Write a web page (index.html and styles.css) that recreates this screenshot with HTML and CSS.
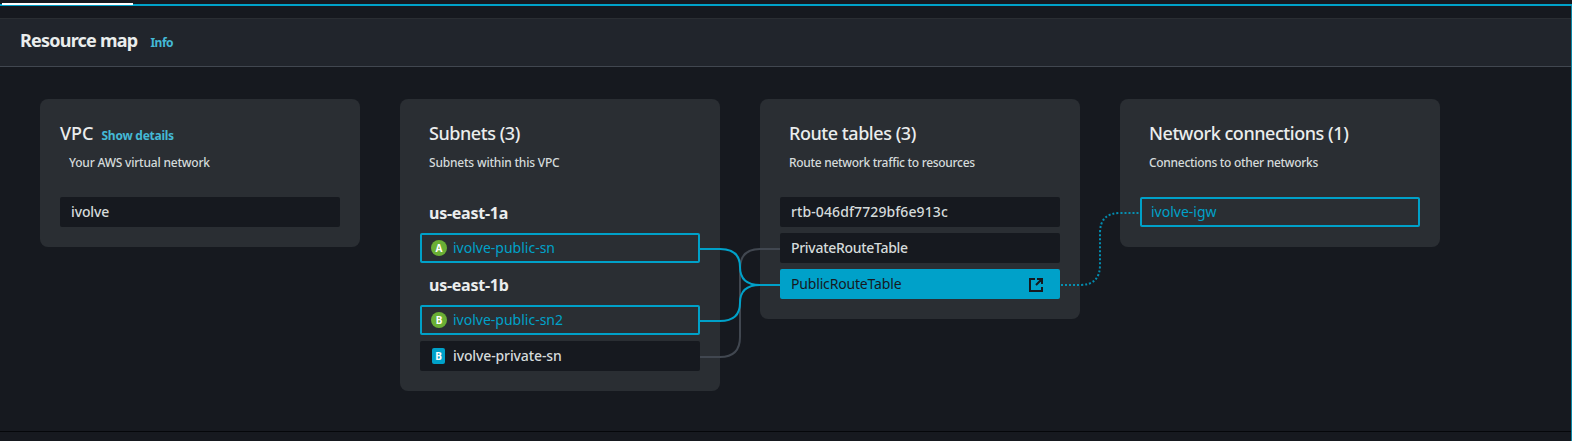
FILE: index.html
```html
<!DOCTYPE html>
<html lang="en">
<head>
<meta charset="utf-8">
<title>Resource map</title>
<link rel="stylesheet" href="styles.css">
</head>
<body>
<div class="tabs"><span class="tab-active"></span></div>
<section class="panel">
  <header class="panel-header">
    <h2 class="panel-title">Resource map</h2>
    <a class="link info">Info</a>
  </header>
  <div class="map">
    <article class="card">
      <div class="card-head card-head-vpc">
        <div class="title-row"><h3 class="card-title title-vpc">VPC</h3><a class="link details">Show details</a></div>
        <p class="card-desc desc-vpc">Your AWS virtual network</p>
      </div>
      <div class="item"><span class="name">ivolve</span></div>
    </article>
    <article class="card">
      <div class="card-head">
        <div class="title-row"><h3 class="card-title">Subnets (3)</h3></div>
        <p class="card-desc">Subnets within this VPC</p>
      </div>
      <h4 class="zone">us-east-1a</h4>
      <div class="item outlined"><span class="badge public">A</span><span class="name">ivolve-public-sn</span></div>
      <h4 class="zone">us-east-1b</h4>
      <div class="item outlined"><span class="badge public">B</span><span class="name">ivolve-public-sn2</span></div>
      <div class="item"><span class="badge private">B</span><span class="name">ivolve-private-sn</span></div>
    </article>
    <article class="card">
      <div class="card-head">
        <div class="title-row"><h3 class="card-title">Route tables (3)</h3></div>
        <p class="card-desc desc-tight">Route network traffic to resources</p>
      </div>
      <div class="item"><span class="name name-id">rtb-046df7729bf6e913c</span></div>
      <div class="item"><span class="name name-table">PrivateRouteTable</span></div>
      <div class="item selected"><span class="name name-table">PublicRouteTable</span>
        <svg class="external" viewBox="0 0 16 16" width="16" height="16"><path d="M7 2H2v12h12v-4M9 2h5v5M14 2 8 8"/></svg>
      </div>
    </article>
    <article class="card">
      <div class="card-head">
        <div class="title-row"><h3 class="card-title">Network connections (1)</h3></div>
        <p class="card-desc desc-tight">Connections to other networks</p>
      </div>
      <div class="item outlined"><span class="name">ivolve-igw</span></div>
    </article>
    <svg class="connections" viewBox="0 0 1400 292" width="1400" height="292">
      <path class="wire" d="M660 258H680Q700 258 700 238V170Q700 150 720 150H740"/>
      <path class="wire active" d="M660 150H680Q700 150 700 168Q700 186 720 186H740"/>
      <path class="wire active" d="M660 222H680Q700 222 700 204Q700 186 720 186H740"/>
      <path class="wire active dotted" d="M1021 186H1040Q1060 186 1060 166V134Q1060 114 1080 114H1100"/>
    </svg>
  </div>
</section>
</body>
</html>
```
FILE: styles.css
```css
* { box-sizing: border-box; margin: 0; padding: 0; }
body {
  height: 441px;
  overflow: hidden;
  background: #16191f;
  color: #eaeded;
  font-family: "Noto Sans", "Open Sans", sans-serif;
  display: flex;
  flex-direction: column;
}
.tabs { height: 6px; flex: none; border-bottom: 2px solid #00a1c9; }
.tab-active {
  position: absolute; left: 2px; top: 3px;
  width: 131px; height: 2px; background: #fff;
}
.panel {
  height: 426px;
  flex: none;
  padding-top: 12px;
  border-bottom: 1px solid #05070a;
}
body::after {
  content: "";
  position: absolute; right: 0; top: 6px;
  width: 1px; height: 435px; background: #0b86a5;
}
.panel-header {
  height: 49px;
  display: flex;
  align-items: baseline;
  gap: 13px;
  padding: 8px 20px 0;
  background: #21252c;
  border-top: 1px solid #2a2e33;
  border-bottom: 1px solid #414750;
}
.panel-title { font-size: 18px; line-height: 26px; font-weight: 700; letter-spacing: -0.77px; }
.link { color: #44b9d6; font-size: 12px; font-weight: 700; }
.info { letter-spacing: -0.5px; }
.details { letter-spacing: -0.25px; }
.map {
  position: relative;
  display: flex;
  align-items: flex-start;
  gap: 40px;
  padding: 32px 0 0 40px;
}
.card {
  width: 320px;
  flex: none;
  display: flex;
  flex-direction: column;
  gap: 6px;
  padding: 20px;
  border-radius: 8px;
  background: #2a2e33;
}
.card-head { height: 72px; padding-left: 9px; }
.card-head-vpc { padding-left: 0; }
.card-title.title-vpc { letter-spacing: 0; }
.desc-vpc { padding-left: 9px; }
.title-row { display: flex; align-items: baseline; gap: 8px; height: 30px; }
.card-title { font-size: 18px; line-height: 28px; font-weight: 500; letter-spacing: -0.45px; }
.card-desc { font-size: 12px; line-height: 18px; margin-top: 5px; color: #d5dbdb; font-weight: 500; letter-spacing: -0.2px; }
.card-desc.desc-tight { letter-spacing: -0.3px; }
.zone { height: 30px; padding-left: 9px; font-size: 16px; line-height: 33px; font-weight: 700; letter-spacing: -0.25px; }
.item {
  height: 30px;
  display: flex;
  align-items: center;
  padding: 0 11px;
  border-radius: 2px;
  background: #16191f;
  color: #d5dbdb;
  font-size: 14px;
  font-weight: 500;
  letter-spacing: -0.12px;
}
.name { padding-bottom: 2px; }
.name-id { letter-spacing: 0.1px; }
.name-table { letter-spacing: -0.3px; }
.outlined { border: 2px solid #00a1c9; padding: 0 9px; background: none; color: #00a1c9; font-weight: 400; letter-spacing: 0; }
.selected { background: #00a1c9; color: #16191f; justify-content: space-between; padding-right: 16px; font-weight: 400; }
.selected .name { letter-spacing: -0.17px; }
.badge {
  flex: none;
  display: grid;
  place-items: center;
  height: 16px;
  color: #fff;
  font-size: 10px;
  line-height: 16px;
  font-weight: 700;
  letter-spacing: 0;
}
.public { width: 16px; border-radius: 50%; background: #6aaf35; margin-right: 6px; }
.private { width: 13px; border-radius: 2px; background: #00a1c9; margin: 0 8px 0 1px; }
.external { fill: none; stroke: #16191f; stroke-width: 2; margin-top: 2px; }
.connections { position: absolute; left: 40px; top: 32px; }
.wire { fill: none; stroke: #414750; stroke-width: 2; }
.active { stroke: #00a1c9; }
.dotted { stroke-dasharray: 2 2; opacity: .85; }
```
